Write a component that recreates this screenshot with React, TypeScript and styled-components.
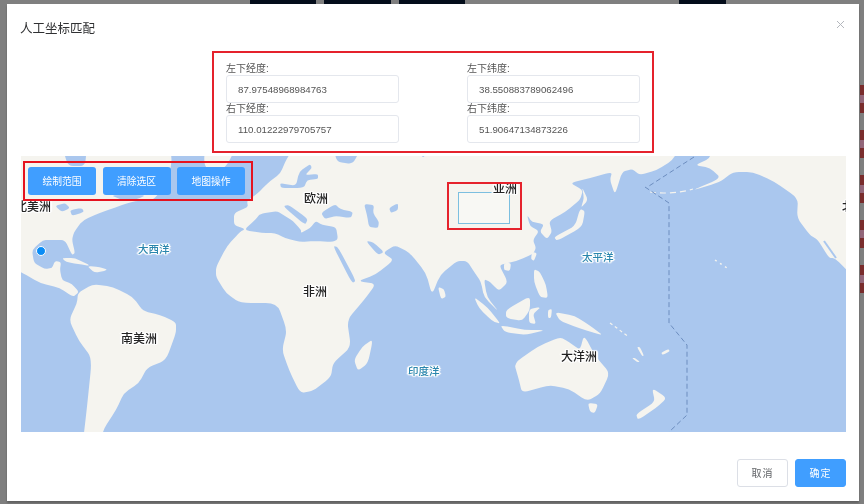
import styled, {createGlobalStyle} from 'styled-components';

const LAND = '#f5f4ef';
const WATER = '#aac7ee';

const landShapes = [
  // americas, left edge of the map
  'M5,140 L170,140 L172,166 L160,192 L153,200 L135,201 L122,205 L100,213 L83,220 L74,232 L72,240 L75,253 L72,255 L65,240 L52,240 L43,240 L32,250 L34,263 L45,269 L52,268 L55,261 L61,262 L60,270 L62,280 L72,284 L79,292 L73,297 L60,288 L40,283 L21,272 L5,266 Z',
  'M78,293 L93,284 L113,287 L133,297 L143,311 L160,315 L176,322 L176,333 L166,360 L147,368 L139,383 L124,393 L116,410 L103,430 L100,450 L82,450 L87,407 L92,358 L79,341 L69,320 L77,303 Z',
  'M205,140 L240,140 L226,167 L212,173 L204,165 Z',
  // eurasia + africa
  'M234,213 L248,207 L247,201 L258,193 L262,189 L270,181 L280,174 L287,158 L300,140 L683,140 L673,160 L657,170 L640,175 L632,169 L622,172 L615,195 L610,180 L612,172 L590,178 L570,183 L583,190 L580,200 L565,212 L549,221 L552,232 L547,239 L540,232 L544,224 L532,222 L527,215 L530,226 L539,231 L533,240 L536,248 L533,254 L519,260 L509,263 L499,265 L508,282 L499,291 L490,282 L484,279 L487,297 L499,312 L484,297 L481,282 L475,273 L467,261 L457,261 L440,275 L432,295 L426,273 L410,253 L395,245 L383,253 L394,260 L375,275 L358,281 L376,284 L364,300 L347,320 L351,347 L333,363 L331,377 L313,391 L300,393 L289,370 L282,350 L287,330 L277,303 L240,303 L226,293 L216,277 L216,267 L227,246 L240,232 L245,229 L234,225 Z',
  // alaska, canada, west coast
  'M708,140 L711,158 L695,165 L710,168 L721,178 L691,191 L720,182 L733,172 L753,172 L773,181 L798,198 L797,218 L810,235 L818,240 L829,258 L834,258 L840,263 L860,284 L860,140 Z',
  // australia, tasmania, nz
  'M514,363 L539,346 L560,337 L569,342 L580,350 L584,335 L596,357 L610,373 L600,394 L587,401 L569,389 L549,385 L522,393 L519,380 Z',
  'M588,403 L598,404 L595,413 L590,412 Z',
  'M652,388 L667,398 L656,408 L638,420 L636,414 L655,402 Z',
  // new guinea, borneo, sumatra, java, sulawesi
  'M555,312 L575,316 L589,325 L604,336 L579,328 L560,321 Z',
  'M506,310 L530,296 L530,310 L522,321 L506,318 Z',
  'M474,297 L487,307 L501,324 L492,321 L479,308 Z',
  'M500,325 L525,330 L546,330 L525,335 L505,332 Z',
  'M529,309 L541,307 L533,314 L536,324 L529,323 Z',
  'M548,310 L552,309 L551,318 L548,318 Z',
  // japan, sakhalin, philippines, taiwan, hainan, sri lanka
  'M554,237 L575,226 L580,209 L585,211 L582,227 L557,241 Z',
  'M582,187 L588,200 L581,208 L584,198 Z',
  'M534,269 L540,272 L546,285 L548,298 L540,297 L534,282 Z',
  'M532,252 L537,253 L534,261 L531,259 Z',
  'M504,263 L511,263 L510,271 L504,270 Z',
  'M438,287 L444,289 L446,297 L441,299 Z',
  // madagascar, caribbean
  'M373,339 L368,363 L358,371 L354,360 L362,347 Z',
  'M62,258 L75,258 L91,266 L78,264 L66,262 Z',
  'M87,266 L100,267 L108,270 L95,273 Z',
  // small islands in the med
  'M269,221 L274,221 L274,230 L269,230 Z',
  'M285,232 L294,230 L291,236 Z',
  'M313,233 L323,231 L320,235 Z',
  // pacific
  'M661,353 L668,349 L670,351 L663,355 Z',
  'M632,358 L635,358 L640,362 L637,362 Z',
  'M637,347 L640,347 L644,356 L642,356 Z',
];

const waterShapes = [
  'M62,146 L87,146 L85,166 L68,166 Z',
  // great lakes
  'M55,206 L65,203 L70,208 L62,212 Z',
  'M70,210 L82,208 L84,212 L72,216 Z',
  // st lawrence
  'M110,195 L146,195 L138,199 L125,201 Z',
  // med
  'M244,230 L255,220 L260,214 L277,211 L285,216 L293,221 L301,230 L301,233 L310,228 L316,221 L322,225 L336,227 L338,239 L333,242 L315,241 L300,242 L285,238 L275,233 L262,233 Z',
  'M283,206 L289,205 L308,219 L305,225 Z',
  // black sea, caspian, aral
  'M321,213 L335,204 L340,209 L353,212 L351,218 L335,216 L325,219 Z',
  'M364,204 L374,205 L373,213 L379,222 L378,228 L369,227 L367,215 Z',
  'M389,208 L398,203 L398,210 L391,213 Z',
  // red sea, gulf
  'M333,246 L338,247 L356,281 L352,283 Z',
  'M366,241 L373,242 L384,252 L378,255 Z',
  // baltic
  'M296,186 L299,172 L310,164 L312,168 L305,175 L318,174 L318,179 L307,180 L304,188 L281,188 L280,183 Z',
  // barents, kara
  'M333,146 L362,146 L353,164 L337,162 Z',
  'M418,146 L430,146 L423,159 Z',
];

// pull each corner of a 'M.. L.. Z' outline into a short curve, so coasts don't look cut with scissors
const smooth = (d: string): string => {
  const pts = (d.match(/-?\d+(\.\d+)?,-?\d+(\.\d+)?/g) ?? []).map((s) => s.split(',').map(Number));
  const at = (a: number[], b: number[], t: number) =>
    `${(a[0] + (b[0] - a[0]) * t).toFixed(1)},${(a[1] + (b[1] - a[1]) * t).toFixed(1)}`;
  const n = pts.length;
  let out = `M${at(pts[0], pts[n - 1], 0.3)}`;
  pts.forEach((p, i) => {
    const next = pts[(i + 1) % n];
    out += ` Q${p[0]},${p[1]} ${at(p, next, 0.3)} L${at(next, p, 0.3)}`;
  });
  return `${out} Z`;
};

const Page = createGlobalStyle`
  html, body {
    margin: 0;
    padding: 0;
    width: 864px;
    height: 504px;
    overflow: hidden;
    background: #7f7f7f;
  }
  * {
    box-sizing: border-box;
  }
`;

const Screen = styled.div`
  position: relative;
  display: flex;
  flex-direction: column;
  width: 864px;
  height: 504px;
  overflow: hidden;
  background: #7f7f7f;
  font-family: "Liberation Sans", "Noto Sans CJK SC", sans-serif;
  filter: blur(0.45px);
`;

const BehindBar = styled.div`
  display: flex;
  gap: 8px;
  height: 4px;
  padding-left: 250px;
`;

const BehindButton = styled.div<{$w: number; $after?: number}>`
  width: ${(p) => p.$w}px;
  margin-right: ${(p) => p.$after ?? 0}px;
  background: #030d1a;
`;

const BehindRows = styled.div`
  display: flex;
  flex-direction: column;
  gap: 17px;
  align-self: flex-end;
  width: 4px;
  margin-top: 81px;
`;

const BehindRow = styled.div`
  height: 28px;
  background: linear-gradient(#7a2d2d 35%, #93677a 35%, #93677a 65%, #7a2d2d 65%);
`;

const Dialog = styled.div`
  position: absolute;
  top: 4px;
  left: 7px;
  display: flex;
  flex-direction: column;
  width: 852px;
  height: 497px;
  padding: 0 13px 14px 14px;
  background: #fff;
  box-shadow: 0 2px 2px rgba(0, 0, 0, 0.25);
`;

const Header = styled.div`
  display: flex;
  align-items: center;
  justify-content: space-between;
  height: 47px;
  padding: 0 2px 0 0;
`;

const Title = styled.span`
  margin-left: -1px;
  font-size: 12.5px;
  color: #303133;
`;

const CloseIcon = styled.svg`
  width: 7px;
  height: 7px;
  margin-bottom: 7px;
  stroke: #b4b7bd;
  stroke-width: 1;
`;

const CoordBox = styled.div`
  display: grid;
  grid-template-columns: 173px 173px;
  align-content: start;
  column-gap: 68px;
  width: 442px;
  height: 102px;
  margin-left: 191px;
  padding: 10px 0 0 12px;
  border: 2px solid #e5222c;
`;

const Field = styled.label`
  display: block;
  font-size: 10px;
  line-height: 12px;
  color: #555;
`;

const FieldInput = styled.input`
  display: block;
  width: 173px;
  height: 28px;
  padding: 0 11px;
  border: 1px solid #e4e7ed;
  border-radius: 3px;
  outline: none;
  background: #fff;
  font-family: inherit;
  font-size: 9.7px;
  color: #555;
`;

const MapFrame = styled.div`
  position: relative;
  flex: none;
  width: 825px;
  height: 276px;
  margin-top: 3px;
  overflow: hidden;
  background: ${WATER};
`;

const MapDrawing = styled.svg`
  display: block;
  width: 825px;
  height: 276px;
`;

const MapToolbar = styled.div`
  position: absolute;
  top: 5px;
  left: 2px;
  display: flex;
  gap: 6.5px;
  width: 230px;
  height: 40px;
  padding: 4px 0 0 3px;
  border: 2px solid #e5131f;
`;

const ToolButton = styled.button`
  width: 68px;
  height: 27.5px;
  padding: 0;
  border: 0;
  border-radius: 3px;
  background: #409eff;
  font-family: inherit;
  font-size: 9.8px;
  color: #fff;
`;

const MapLabel = styled.span<{$x: number; $y: number; $sea?: boolean}>`
  position: absolute;
  left: ${(p) => p.$x}px;
  top: ${(p) => p.$y}px;
  font-family: "Noto Sans CJK SC", sans-serif;
  font-size: ${(p) => (p.$sea ? 10.5 : 12)}px;
  font-weight: 500;
  line-height: 14px;
  white-space: nowrap;
  color: ${(p) => (p.$sea ? '#2a86ad' : '#222')};
  text-shadow: 1px 0 1px #fff, -1px 0 1px #fff, 0 1px 1px #fff, 0 -1px 1px #fff,
    1px 1px 1px #fff, -1px -1px 1px #fff, 1px -1px 1px #fff, -1px 1px 1px #fff,
    2px 0 1px #fff, -2px 0 1px #fff;
`;

const MarkBox = styled.div`
  position: absolute;
  top: 26px;
  left: 426px;
  width: 75px;
  height: 48px;
  border: 2px solid #e5222c;
`;

const Selection = styled.div`
  position: absolute;
  top: 36px;
  left: 437px;
  width: 51.5px;
  height: 31.5px;
  border: 1.5px solid #7cbfe0;
  background: rgba(255, 255, 255, 0.35);
`;

const Dot = styled.div`
  position: absolute;
  top: 90px;
  left: 15px;
  width: 10px;
  height: 10px;
  border: 1.5px solid #fff;
  border-radius: 50%;
  background: #0a8cf5;
`;

const Footer = styled.div`
  display: flex;
  justify-content: flex-end;
  gap: 7px;
  margin-top: 27px;
`;

const FooterButton = styled.button<{$primary?: boolean}>`
  width: 51px;
  height: 28px;
  padding: 0 0 2px;
  border: 1px solid ${(p) => (p.$primary ? '#409eff' : '#dcdfe6')};
  border-radius: 3px;
  background: ${(p) => (p.$primary ? '#409eff' : '#fff')};
  font-family: inherit;
  font-size: 10px;
  letter-spacing: 1px;
  color: ${(p) => (p.$primary ? '#fff' : '#606266')};
`;

const fields = [
  {label: '左下经度:', value: '87.97548968984763'},
  {label: '左下纬度:', value: '38.550883789062496'},
  {label: '右下经度:', value: '110.01222979705757'},
  {label: '右下纬度:', value: '51.90647134873226'},
];

const mapLabels = [
  {text: '北美洲', x: -6, y: 43},
  {text: '欧洲', x: 283, y: 35},
  {text: '亚洲', x: 472, y: 25},
  {text: '非洲', x: 282, y: 128},
  {text: '南美洲', x: 100, y: 175},
  {text: '大洋洲', x: 540, y: 193},
  {text: '北', x: 821, y: 43},
  {text: '大西洋', x: 117, y: 86, sea: true},
  {text: '太平洋', x: 561, y: 94, sea: true},
  {text: '印度洋', x: 387, y: 208, sea: true},
];

const App = (): JSX.Element => {
  return (
    <Screen>
      <Page />
      <BehindBar>
        <BehindButton $w={66} />
        <BehindButton $w={67} />
        <BehindButton $w={66} $after={206} />
        <BehindButton $w={47} />
      </BehindBar>
      <BehindRows>
        {[0, 1, 2, 3, 4].map((el) => (
          <BehindRow key={el} />
        ))}
      </BehindRows>
      <Dialog>
        <Header>
          <Title>人工坐标匹配</Title>
          <CloseIcon viewBox="0 0 7 7">
            <path d="M0 0 L7 7 M7 0 L0 7" />
          </CloseIcon>
        </Header>
        <CoordBox>
          {fields.map((el) => (
            <Field key={el.label}>
              {el.label}
              <FieldInput readOnly value={el.value} />
            </Field>
          ))}
        </CoordBox>
        <MapFrame>
          <MapDrawing viewBox="21 156 825 276">
            {landShapes.map((d) => (
              <path key={d} d={smooth(d)} fill={LAND} />
            ))}
            {waterShapes.map((d) => (
              <path key={d} d={smooth(d)} fill={WATER} />
            ))}
            <path d="M824,241 L836,258" stroke={WATER} strokeWidth="2" fill="none" />
            <path d="M650,192 C662,194 680,193 693,189" stroke={LAND} strokeWidth="1.2" strokeDasharray="6 4" fill="none" />
            <path d="M715,260 L727,268" stroke={LAND} strokeWidth="1.4" strokeDasharray="2 4" fill="none" />
            <path d="M610,323 L629,337" stroke={LAND} strokeWidth="1.2" strokeDasharray="3 3" fill="none" />
            <path
              d="M694,157 L649,186 M645,187 L669,203 L669,323 L687,345 L687,415 L669,432"
              stroke="#6c8dbf"
              strokeWidth="1"
              strokeDasharray="5 3"
              fill="none"
            />
          </MapDrawing>
          <Selection />
          {mapLabels.map((el) => (
            <MapLabel key={el.text} $x={el.x} $y={el.y} $sea={el.sea}>
              {el.text}
            </MapLabel>
          ))}
          <MarkBox />
          <Dot />
          <MapToolbar>
            <ToolButton>绘制范围</ToolButton>
            <ToolButton>清除选区</ToolButton>
            <ToolButton>地图操作</ToolButton>
          </MapToolbar>
        </MapFrame>
        <Footer>
          <FooterButton>取消</FooterButton>
          <FooterButton $primary>确定</FooterButton>
        </Footer>
      </Dialog>
    </Screen>
  );
};

export default App;
